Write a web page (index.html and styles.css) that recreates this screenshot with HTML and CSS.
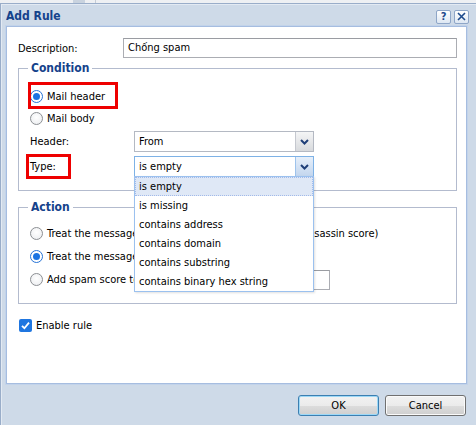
FILE: index.html
```html
<!DOCTYPE html>
<html>
<head>
<meta charset="utf-8">
<title>Add Rule</title>
<link rel="stylesheet" href="styles.css">
</head>
<body>
<div class="desk"><span class="desk-a"></span><span class="desk-b"></span></div>
<div class="dialog">
  <div class="titlebar">
    <span class="title">Add Rule</span>
    <span class="tools">
      <span class="tool tool-help">?</span>
      <span class="tool tool-close"><svg width="9" height="9" viewBox="0 0 9 9"><path d="M1 1 L8 8 M8 1 L1 8" stroke="#1d4a8c" stroke-width="1.6" fill="none"/></svg></span>
    </span>
  </div>
  <div class="panel">
    <div class="field-row desc-row">
      <span class="lbl">Description:</span>
      <div class="textbox wide">Chống spam</div>
    </div>

    <fieldset class="group cond">
      <legend>Condition</legend>
      <div class="opt"><span class="radio on"></span><span class="hl hl-mail">Mail header</span></div>
      <div class="opt"><span class="radio"></span>Mail body</div>
      <div class="field-row sel-row first">
        <span class="lbl lbl-sm">Header:</span>
        <div class="select"><span class="sel-text">From</span><span class="sel-btn"><svg width="9" height="6" viewBox="0 0 9 6"><path d="M1 1 L4.5 4.5 L8 1" stroke="#1f3f78" stroke-width="2" fill="none"/></svg></span></div>
      </div>
      <div class="field-row sel-row">
        <span class="lbl lbl-sm"><span class="hl hl-type">Type:</span></span>
        <div class="select focus">
          <span class="sel-text">is empty</span><span class="sel-btn"><svg width="9" height="6" viewBox="0 0 9 6"><path d="M1 1 L4.5 4.5 L8 1" stroke="#1f3f78" stroke-width="2" fill="none"/></svg></span>
          <ul class="list">
            <li class="sel">is empty</li>
            <li>is missing</li>
            <li>contains address</li>
            <li>contains domain</li>
            <li>contains substring</li>
            <li>contains binary hex string</li>
          </ul>
        </div>
      </div>
    </fieldset>

    <fieldset class="group act">
      <legend>Action</legend>
      <div class="opt opt-a"><span class="radio"></span>Treat the message as spam (add 10 points to SpamAssassin score)</div>
      <div class="opt opt-a"><span class="radio on"></span>Treat the message as not spam</div>
      <div class="opt opt-a"><span class="radio"></span>Add spam score to the message:<span class="textbox score"></span></div>
    </fieldset>

    <div class="check-row"><span class="check"><svg width="11" height="11" viewBox="0 0 11 11"><path d="M2 5.8 L4.4 8.2 L9 2.6" stroke="#fff" stroke-width="1.8" fill="none"/></svg></span>Enable rule</div>
  </div>
  <div class="footer">
    <button class="btn btn-default">OK</button>
    <button class="btn">Cancel</button>
  </div>
</div>
</body>
</html>
```
FILE: styles.css
```css
html, body {
  margin: 0;
  padding: 0;
  width: 476px;
  height: 425px;
  overflow: hidden;
  background: #e9ecf0;
  font-family: "DejaVu Sans Condensed", "DejaVu Sans", sans-serif;
  font-size: 11px;
  color: #000;
}

.desk {
  height: 3px;
  display: flex;
  background: #eef0f3;
}
.desk-a {
  margin-left: 73px;
  width: 12px;
  background: #c9d3df;
}
.desk-b {
  margin-left: 10px;
  width: 1px;
  background: #c5ccd6;
}

.dialog {
  width: 480px;
  height: 422px;
  box-sizing: border-box;
  background: #cedae8;
  border-left: 1px solid #99adc9;
  border-top: 1px solid #99adc9;
  box-shadow: inset 1px 1px 0 #e3eaf3;
}

.titlebar {
  height: 22px;
  display: flex;
  align-items: center;
  padding-left: 5px;
  box-sizing: border-box;
}
.title {
  font-weight: bold;
  font-size: 12px;
  color: #15428b;
  flex: 1;
  margin-top: 1px;
}
.tools {
  display: flex;
  gap: 3px;
  margin-right: 11px;
  margin-top: 3px;
}
.tool {
  width: 13px;
  height: 12px;
  border: 1px solid #8ea6c8;
  border-radius: 2px;
  background: linear-gradient(#ffffff, #dde7f3);
  display: flex;
  align-items: center;
  justify-content: center;
  font-weight: bold;
  font-size: 11px;
  color: #1d4a8c;
  line-height: 12px;
}

.panel {
  margin-left: 5px;
  width: 461px;
  height: 358px;
  box-sizing: border-box;
  background: #fff;
  border: 1px solid #a6bde0;
  box-shadow: 0 0 0 1px #c2d3ea;
  padding: 11px 9px 0 11px;
  position: relative;
}

.field-row {
  display: flex;
  align-items: center;
}
.lbl {
  width: 105px;
  flex: none;
  position: relative;
}
.lbl-sm {
  width: 104px;
}

.textbox {
  height: 20px;
  box-sizing: border-box;
  border: 1px solid #abadb3;
  border-top-color: #9a9ca2;
  background: #fff;
  padding: 0 4px;
  line-height: 18px;
}
.wide {
  flex: 1;
}

.group {
  margin: 0;
  border: 1px solid #b3bbce;
  padding: 0 10px 0 11px;
}
.group legend {
  font-weight: bold;
  font-size: 12px;
  color: #15428b;
  padding: 0 3px;
  margin-left: -2px;
  line-height: 14px;
}
.cond {
  margin-top: 3px;
  padding-top: 10px;
  padding-bottom: 13px;
}
.act {
  margin-top: 9px;
  padding-top: 8px;
  padding-bottom: 12px;
}

.opt {
  height: 22px;
  display: flex;
  align-items: center;
  white-space: nowrap;
}
.opt-a {
  height: 23px;
}

.radio {
  width: 13px;
  height: 13px;
  box-sizing: border-box;
  border: 1px solid #8c8f93;
  border-radius: 50%;
  background: radial-gradient(circle at 50% 40%, #ffffff, #e9ebee);
  margin-right: 4px;
  flex: none;
  position: relative;
}
.radio.on {
  border-color: #2673d6;
  background: #fff;
}
.radio.on::after {
  content: "";
  position: absolute;
  left: 2px;
  top: 2px;
  width: 7px;
  height: 7px;
  border-radius: 50%;
  background: #1a73e2;
}

.hl {
  position: relative;
}
.hl::before {
  content: "";
  position: absolute;
  border: 3px solid #ee0000;
}
.hl-mail::before {
  left: -19px;
  top: -8px;
  width: 84px;
  height: 21px;
}
.hl-type::before {
  left: -4px;
  top: -6px;
  width: 39px;
  height: 19px;
}

.sel-row {
  margin-top: 4px;
}
.sel-row.first {
  margin-top: 2px;
}

.select {
  width: 180px;
  height: 21px;
  box-sizing: border-box;
  border: 1px solid #b4b9c3;
  display: flex;
  position: relative;
  background: #fff;
}
.select.focus {
  border-color: #7eb2e6;
}
.sel-text {
  flex: 1;
  padding-left: 4px;
  line-height: 19px;
}
.sel-btn {
  width: 17px;
  border-left: 1px solid #c5c8cf;
  background: linear-gradient(#f4f5f6, #d8dadd);
  display: flex;
  align-items: center;
  justify-content: center;
}
.focus .sel-btn {
  border-left-color: #9ec3ec;
  background: linear-gradient(#e6effa, #c3d6ee);
}

.list {
  position: absolute;
  left: -1px;
  top: 19px;
  width: 180px;
  margin: 0;
  padding: 0;
  list-style: none;
  background: #fff;
  border: 1px solid #9bc1ef;
  box-sizing: border-box;
  box-shadow: 1px 1px 2px rgba(0, 0, 0, 0.12);
  z-index: 2;
}
.list li {
  height: 19px;
  line-height: 19px;
  padding-left: 4px;
  box-sizing: border-box;
}
.list li.sel {
  background: #dfe8f6;
  border: 1px dotted #a3bae9;
  line-height: 17px;
  padding-left: 3px;
}

.score {
  display: inline-block;
  width: 112px;
  margin-left: 8px;
}

.check-row {
  display: flex;
  align-items: center;
  height: 22px;
  margin-top: 10px;
  margin-left: 1px;
}
.check {
  width: 13px;
  height: 13px;
  border-radius: 2px;
  background: #1f76e0;
  display: flex;
  align-items: center;
  justify-content: center;
  margin-right: 4px;
}

.footer {
  display: flex;
  justify-content: flex-end;
  gap: 6px;
  padding: 11px 14px 0 0;
}
.btn {
  width: 81px;
  height: 21px;
  box-sizing: border-box;
  border: 1px solid #707070;
  border-radius: 3px;
  background: linear-gradient(#f2f2f2 0%, #ebebeb 50%, #dddddd 51%, #cfcfcf 100%);
  font-family: inherit;
  font-size: 11px;
  color: #000;
  padding: 0;
  box-shadow: inset 0 0 0 1px #fafafa;
}
.btn-default {
  border-color: #3c7fb1;
  box-shadow: inset 0 0 0 1px #9cd8f7;
}
```
